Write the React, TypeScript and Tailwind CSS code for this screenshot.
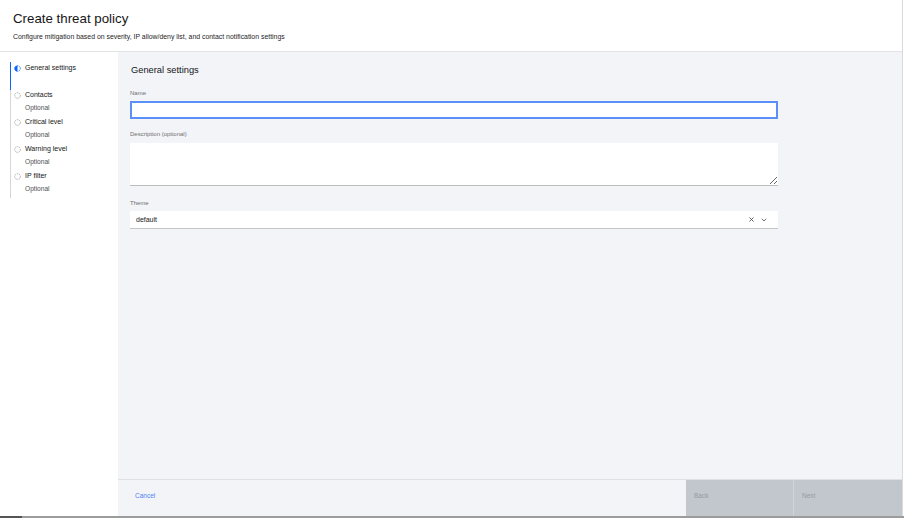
import { X, ChevronDown } from "lucide-react";

const font = "font-['Liberation_Sans',Arial,sans-serif]";

// ── Step icons ────────────────────────────────────────────────────────────────

function CurrentIcon() {
  return (
    <svg width="7" height="7" viewBox="0 0 16 16" className="shrink-0">
      <circle cx="8" cy="8" r="6.5" fill="none" stroke="#0f62fe" strokeWidth="2" strokeDasharray="2.5 1.6" />
      <path d="M8 1.5 A6.5 6.5 0 0 0 8 14.5 Z" fill="#0f62fe" />
    </svg>
  );
}

function IncompleteIcon() {
  return (
    <svg width="7" height="7" viewBox="0 0 16 16" className="shrink-0">
      <circle cx="8" cy="8" r="6.5" fill="none" stroke="#8d8d8d" strokeWidth="1.6" strokeDasharray="3 1.8" />
    </svg>
  );
}

const steps = [
  { label: "Contacts" },
  { label: "Critical level" },
  { label: "Warning level" },
  { label: "IP filter" },
];

function Sidebar() {
  return (
    <aside className="w-[118px] shrink-0 bg-white pt-[10px] pl-[10px]">
      <div className="flex flex-col">
        <div className="h-[28px] border-l-[1.5px] border-[#0f62fe] pt-[1px] pl-[3px] flex items-start gap-[4px]">
          <div className="h-[10px] flex items-center">
            <CurrentIcon />
          </div>
          <span className="text-[7px] leading-[10px] text-[#161616]">General settings</span>
        </div>
        {steps.map((s) => (
          <div key={s.label} className="h-[27px] border-l border-[#d6d6d6] pl-[3px] flex flex-col">
            <div className="flex items-start gap-[4px]">
              <div className="h-[10px] flex items-center">
                <IncompleteIcon />
              </div>
              <span className="text-[7px] leading-[10px] text-[#161616]">{s.label}</span>
            </div>
            <span className="mt-[3px] pl-[11px] text-[6.6px] leading-[10px] text-[#525252]">Optional</span>
          </div>
        ))}
      </div>
    </aside>
  );
}

// ── Form ──────────────────────────────────────────────────────────────────────

function Form() {
  return (
    <div className="flex-1 pl-[12px] pt-[12px] flex flex-col">
      <h2 className="pl-[1px] text-[9.3px] leading-[12px] text-[#161616]">General settings</h2>

      <label className="mt-[13px] text-[6px] leading-[8px] text-[#6f6f6f]">Name</label>
      <input className="mt-[4px] w-[648px] h-[18px] bg-white border-2 border-[#5d8ff8] outline-none px-[6px] text-[7px]" />

      <label className="mt-[11px] text-[6px] leading-[8px] text-[#6f6f6f]">Description (optional)</label>
      <textarea className="mt-[5px] w-[648px] h-[43px] bg-white border-b border-[#bdbdbd] outline-none px-[6px] text-[7px] resize" />

      <label className="mt-[13px] text-[6px] leading-[8px] text-[#6f6f6f]">Theme</label>
      <div className="mt-[4px] w-[648px] h-[18px] bg-white border-b border-[#c6c6c6] flex items-center pl-[6px] pr-[10px]">
        <span className="flex-1 text-[7px] leading-[10px] text-[#161616]">default</span>
        <X className="w-[7px] h-[7px] text-[#525252]" strokeWidth={3} />
        <ChevronDown className="ml-[5px] w-[8px] h-[8px] text-[#525252]" strokeWidth={2.5} />
      </div>
    </div>
  );
}

function Footer() {
  return (
    <div className="h-[37px] shrink-0 border-t border-[#e0e0e0] flex text-[6.5px] leading-[10px]">
      <div className="flex-1 pl-[17px] pt-[11px] text-[#4f82f2]">Cancel</div>
      <div className="w-[108px] bg-[#c1c7cd] pl-[8px] pt-[11px] border-r border-[#d0d4d8] text-[#959ba1]">Back</div>
      <div className="w-[108px] bg-[#c1c7cd] pl-[8px] pt-[11px] text-[#959ba1]">Next</div>
    </div>
  );
}

export default function App() {
  return (
    <div className={`w-[904px] h-[518px] flex flex-col bg-white overflow-hidden ${font}`}>
      <div className="flex-1 flex flex-col w-[903px] border-r border-[#dadada]">
        <header className="h-[52px] shrink-0 border-b border-[#e4e4e4] px-[13px] pt-[11px]">
          <h1 className="text-[13.3px] leading-[16px] text-[#161616]">Create threat policy</h1>
          <p className="mt-[5px] text-[6.9px] leading-[9px] text-[#262626]">
            Configure mitigation based on severity, IP allow/deny list, and contact notification settings
          </p>
        </header>
        <div className="flex-1 flex min-h-0">
          <Sidebar />
          <main className="flex-1 flex flex-col bg-[#f2f4f8]">
            <Form />
            <Footer />
          </main>
        </div>
      </div>
      <div className="h-[2px] shrink-0 flex">
        <div className="w-[22px] bg-[#555]" />
        <div className="flex-1 bg-[#9c9c9c]" />
      </div>
    </div>
  );
}
